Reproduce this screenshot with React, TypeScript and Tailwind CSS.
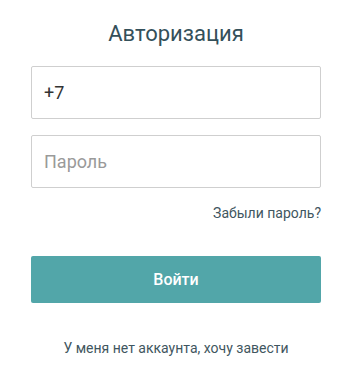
import React from "react";

export default function App() {
  return (
    <div className="min-h-[386px] w-full bg-white font-['Roboto',sans-serif]">
      <div className="ml-[31px] flex w-[290px] flex-col pt-[20px]">
        <h1 className="text-center text-[22px] leading-[28px] font-normal text-[#34505a]">
          Авторизация
        </h1>

        <div className="mt-[18px] flex flex-col gap-[16px]">
          <input
            defaultValue="+7"
            className="h-[53px] w-full rounded-[2px] border border-[#cfcfcf] px-[12px] text-[18px] text-[#333] outline-none"
          />
          <input
            type="password"
            placeholder="Пароль"
            className="h-[53px] w-full rounded-[2px] border border-[#cfcfcf] px-[12px] text-[18px] text-[#333] outline-none placeholder:text-[#9a9a9a]"
          />
        </div>

        <div className="mt-[16px] flex justify-end">
          <a href="#" className="text-[14px] leading-[18px] text-[#3f5660]">
            Забыли пароль?
          </a>
        </div>

        <button className="mt-[34px] h-[47px] w-full rounded-[2px] bg-[#52a6a9] text-[16px] font-medium text-white">
          Войти
        </button>

        <div className="mt-[33px] text-center">
          <a href="#" className="text-[14px] leading-[18px] text-[#3f5660]">
            У меня нет аккаунта, хочу завести
          </a>
        </div>
      </div>
    </div>
  );
}
